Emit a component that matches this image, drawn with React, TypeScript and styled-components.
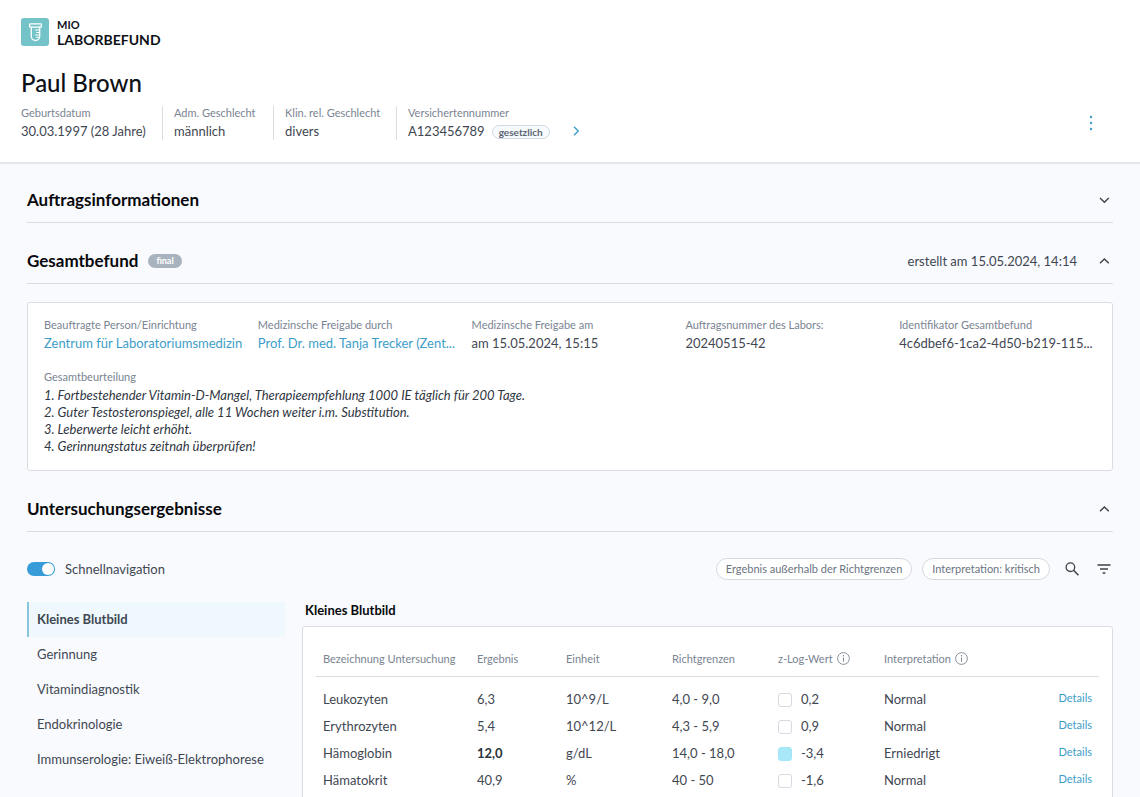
import React, { useState } from "react";
import styled, { createGlobalStyle } from "styled-components";

const color = {
  text: "#3f4752",
  strong: "#0d1117",
  muted: "#7a8492",
  line: "#dadee4",
  link: "#3d9dc8",
  page: "#f9fafe",
};

const GlobalStyle = createGlobalStyle`
  *, *::before, *::after { box-sizing: border-box; }
  html { scrollbar-width: none; }
  body {
    margin: 0;
    background: ${color.page};
    color: ${color.text};
    font-family: Lato, "Noto Sans", sans-serif;
    font-size: 13px;
    line-height: 17px;
  }
  button, input { font: inherit; }
  h1, h2, h3, p, dl, dd { margin: 0; padding: 0; }
`;

const Header = styled.header`
  background: #fff;
  border-bottom: 2px solid #e4e7ec;
  padding: 18px 21px 22px;
`;

const Brand = styled.div`
  display: flex;
  gap: 8px;
`;

const BrandIcon = styled.svg`
  width: 28px;
  height: 28px;
  flex: none;
`;

const BrandText = styled.div`
  color: ${color.strong};
  font-weight: 700;
  font-size: 11px;
  line-height: 14px;
`;

const BrandName = styled.div`
  font-size: 14px;
  line-height: 16px;
`;

const PatientName = styled.h1`
  margin-top: 19px;
  color: ${color.strong};
  font-size: 24px;
  line-height: 32px;
  font-weight: 500;
`;

const PatientRow = styled.div`
  display: flex;
  align-items: center;
  justify-content: space-between;
  margin-top: 7px;
  padding-right: 19px;
`;

const Facts = styled.div`
  display: flex;
`;

const FactList = styled.dl`
  display: flex;
`;

const Fact = styled.div<{ $width: number }>`
  min-width: ${(p) => p.$width}px;

  & + & {
    border-left: 1px solid ${color.line};
    padding-left: 11px;
  }
`;

const Label = styled.dt`
  color: ${color.muted};
  font-size: 11px;
  line-height: 13px;
  white-space: nowrap;
`;

const Value = styled.dd`
  display: flex;
  align-items: center;
  gap: 7px;
  height: 17px;
  margin-top: 4px;
  white-space: nowrap;
`;

const Pill = styled.span`
  border: 1px solid #cfdae3;
  border-radius: 8px;
  background: #f7fbfd;
  padding: 0 6px;
  color: #5b6673;
  font-size: 10px;
  line-height: 12px;
  font-weight: 700;
`;

const FinalBadge = styled.span`
  border-radius: 7px;
  background: #a9b3bf;
  padding: 0 8px;
  color: #fff;
  font-size: 9px;
  line-height: 14px;
  font-weight: 700;
`;

const IconButton = styled.button`
  display: inline-flex;
  align-items: center;
  justify-content: center;
  width: 18px;
  height: 18px;
  padding: 0;
  border: 0;
  background: none;
  color: #3b424c;
  cursor: pointer;
`;

const NextButton = styled(IconButton)`
  align-self: flex-end;
  color: ${color.link};
`;

const MenuButton = styled(IconButton)`
  color: ${color.link};
`;

const Main = styled.main`
  padding: 16px 27px 0;
`;

const SectionHead = styled.div`
  display: flex;
  align-items: center;
  gap: 10px;
  height: 43px;
  border-bottom: 1px solid ${color.line};
  padding-bottom: 2px;
`;

const SectionTitle = styled.h2`
  color: #08090c;
  font-size: 17px;
  line-height: 24px;
  font-weight: 700;
`;

const HeadEnd = styled.div`
  display: flex;
  align-items: center;
  gap: 18px;
  margin-left: auto;
`;

const Section = styled.section`
  & + & { margin-top: 18px; }
`;

const Card = styled.div`
  border: 1px solid ${color.line};
  border-radius: 3px;
  background: #fff;
`;

const ReportCard = styled(Card)`
  margin: 18px 0 14px;
  padding: 15px 20px 15px 16px;
`;

const ReportFacts = styled.dl`
  display: grid;
  grid-template-columns: repeat(5, minmax(0, 1fr));
  column-gap: 21px;
`;

const Link = styled.a`
  color: ${color.link};
  text-decoration: none;
`;

const Assessment = styled.div`
  margin-top: 17px;
`;

const AssessmentLabel = styled.h3`
  color: ${color.muted};
  font-size: 11px;
  line-height: 15px;
  font-weight: 400;
`;

const AssessmentText = styled.div`
  margin-top: 3px;
  color: #2f363f;
  font-style: italic;
`;

const Toolbar = styled.div`
  display: flex;
  align-items: center;
  justify-content: space-between;
  height: 22px;
  margin-top: 26px;
`;

const SwitchLabel = styled.label`
  display: flex;
  align-items: center;
  gap: 10px;
  cursor: pointer;
`;

const Switch = styled.input`
  appearance: none;
  width: 28px;
  height: 14px;
  margin: 0;
  border-radius: 7px;
  background: #b4bdc8;
  cursor: pointer;

  &::before {
    content: "";
    display: block;
    width: 12px;
    height: 12px;
    margin: 1px;
    border-radius: 50%;
    background: #fff;
  }
  &:checked { background: #379cd8; }
  &:checked::before { margin-left: 15px; }
`;

const Filters = styled.div`
  display: flex;
  align-items: center;
  gap: 10px;
`;

const FilterChip = styled.button`
  height: 22px;
  border: 1px solid #d5dae1;
  border-radius: 11px;
  background: #fff;
  padding: 0 9px;
  color: #6a7481;
  font-size: 11px;
  line-height: 20px;
  cursor: pointer;
`;

const Tools = styled.div`
  display: flex;
  gap: 14px;
  margin-left: 3px;
`;

const Results = styled.div`
  display: grid;
  grid-template-columns: 258px minmax(0, 1fr);
  column-gap: 17px;
  margin-top: 22px;
`;

const NavItem = styled.button<{ $active: boolean }>`
  display: block;
  width: 100%;
  height: 35px;
  border: 0;
  border-left: 2px solid ${(p) => (p.$active ? "#86c5da" : "transparent")};
  background: ${(p) => (p.$active ? "#eef8fd" : "none")};
  padding: 0 8px;
  color: ${color.text};
  font-weight: ${(p) => (p.$active ? 700 : 400)};
  text-align: left;
  cursor: pointer;
`;

const GroupTitle = styled.h3`
  padding-left: 3px;
  color: #08090c;
  font-size: 13px;
  line-height: 17px;
  font-weight: 700;
`;

const TableCard = styled(Card)`
  margin-top: 7px;
  padding: 16px 13px 20px;
`;

const Table = styled.table`
  width: 100%;
  table-layout: fixed;
  border-collapse: separate;
  border-spacing: 0;
`;

const HeadCell = styled.th<{ $width?: number }>`
  width: ${(p) => (p.$width ? `${p.$width}px` : "auto")};
  height: 34px;
  border-bottom: 1px solid ${color.line};
  padding: 0 0 2px 7px;
  color: ${color.muted};
  font-size: 11px;
  font-weight: 400;
  text-align: left;
  white-space: nowrap;
`;

const HeadLabel = styled.span`
  display: flex;
  align-items: center;
  gap: 4px;
`;

const Body = styled.tbody`
  &::before {
    content: "";
    display: block;
    height: 9px;
  }
`;

const Cell = styled.td<{ $strong?: boolean }>`
  height: 27px;
  padding: 0 0 0 7px;
  color: ${(p) => (p.$strong ? "#2b323b" : color.text)};
  font-weight: ${(p) => (p.$strong ? 700 : 400)};
  white-space: nowrap;
`;

const ActionCell = styled(Cell)`
  padding: 0 7px 4px 0;
  font-size: 11px;
  text-align: right;
`;

const ZScore = styled.span`
  display: flex;
  align-items: center;
  gap: 9px;
`;

const Swatch = styled.span<{ $low: boolean }>`
  width: 14px;
  height: 14px;
  border: 1px solid ${(p) => (p.$low ? "#a3e6f8" : "#d6dae0")};
  border-radius: 3px;
  background: ${(p) => (p.$low ? "#a9e8f9" : "#fff")};
`;

const Chevron = ({ d }: { d: string }) => (
  <svg width="12" height="12" viewBox="0 0 12 12" fill="none" stroke="currentColor" strokeWidth="1.4" aria-hidden="true">
    <path d={d} />
  </svg>
);
const chevronDown = "M2 4 6.4 8.2 10.8 4";
const chevronUp = "M2 8.2 6.4 4 10.8 8.2";

const InfoIcon = () => (
  <svg width="13" height="13" viewBox="0 0 13 13" fill="none" stroke="currentColor" aria-hidden="true">
    <circle cx="6.5" cy="6.5" r="5.9" strokeWidth="0.9" />
    <path d="M6.5 5.6v4" strokeWidth="1" />
    <circle cx="6.5" cy="3.8" r="0.7" fill="currentColor" stroke="none" />
  </svg>
);

const TestTubeIcon = () => (
  <BrandIcon viewBox="0 0 28 28" fill="none" stroke="#fff" strokeWidth="1.3" strokeLinejoin="round" strokeLinecap="round" aria-hidden="true">
    <rect width="28" height="28" rx="3" fill="#74c3c8" stroke="none" />
    <rect x="8.6" y="5.8" width="11.8" height="3.4" rx="0.8" />
    <path d="M10.3 9.2v9a4.2 4.2 0 0 0 8.4 0v-9" />
    <path d="M18.5 12h-4M18.5 14.5h-2.8M18.5 17h-4M18.2 19.3h-2.6" strokeWidth="1.1" />
  </BrandIcon>
);

const groups = ["Kleines Blutbild", "Gerinnung", "Vitamindiagnostik", "Endokrinologie", "Immunserologie: Eiweiß-Elektrophorese"];

const rows = [
  { name: "Leukozyten", result: "6,3", unit: "10^9/L", range: "4,0 - 9,0", z: "0,2", note: "Normal" },
  { name: "Erythrozyten", result: "5,4", unit: "10^12/L", range: "4,3 - 5,9", z: "0,9", note: "Normal" },
  { name: "Hämoglobin", result: "12,0", unit: "g/dL", range: "14,0 - 18,0", z: "-3,4", note: "Erniedrigt", low: true },
  { name: "Hämatokrit", result: "40,9", unit: "%", range: "40 - 50", z: "-1,6", note: "Normal" },
];

export default function App() {
  const [active, setActive] = useState(groups[0]);
  const [quickNav, setQuickNav] = useState(true);

  return (
    <>
      <GlobalStyle />
      <Header>
        <Brand>
          <TestTubeIcon />
          <BrandText>
            MIO
            <BrandName>LABORBEFUND</BrandName>
          </BrandText>
        </Brand>
        <PatientName>Paul Brown</PatientName>
        <PatientRow>
          <Facts>
            <FactList>
              <Fact $width={141}>
                <Label>Geburtsdatum</Label>
                <Value>30.03.1997 (28 Jahre)</Value>
              </Fact>
              <Fact $width={111}>
                <Label>Adm. Geschlecht</Label>
                <Value>männlich</Value>
              </Fact>
              <Fact $width={123}>
                <Label>Klin. rel. Geschlecht</Label>
                <Value>divers</Value>
              </Fact>
              <Fact $width={171}>
                <Label>Versichertennummer</Label>
                <Value>
                  A123456789 <Pill>gesetzlich</Pill>
                </Value>
              </Fact>
            </FactList>
            <NextButton aria-label="Weitere Angaben">
              <Chevron d="M4 1.8 8.2 6 4 10.2" />
            </NextButton>
          </Facts>
          <MenuButton aria-label="Menü">
            <svg width="4" height="16" viewBox="0 0 4 16" fill="currentColor" aria-hidden="true">
              <circle cx="2" cy="2" r="1.2" />
              <circle cx="2" cy="8" r="1.2" />
              <circle cx="2" cy="14" r="1.2" />
            </svg>
          </MenuButton>
        </PatientRow>
      </Header>

      <Main>
        <Section>
          <SectionHead>
            <SectionTitle>Auftragsinformationen</SectionTitle>
            <HeadEnd>
              <IconButton aria-label="Auftragsinformationen öffnen"><Chevron d={chevronDown} /></IconButton>
            </HeadEnd>
          </SectionHead>
        </Section>

        <Section>
          <SectionHead>
            <SectionTitle>Gesamtbefund</SectionTitle>
            <FinalBadge>final</FinalBadge>
            <HeadEnd>
              <span>erstellt am 15.05.2024, 14:14</span>
              <IconButton aria-label="Gesamtbefund schließen"><Chevron d={chevronUp} /></IconButton>
            </HeadEnd>
          </SectionHead>
          <ReportCard>
            <ReportFacts>
              <div>
                <Label>Beauftragte Person/Einrichtung</Label>
                <Value><Link href="#labor">Zentrum für Laboratoriumsmedizin</Link></Value>
              </div>
              <div>
                <Label>Medizinsche Freigabe durch</Label>
                <Value><Link href="#freigabe">Prof. Dr. med. Tanja Trecker (Zent...</Link></Value>
              </div>
              <div>
                <Label>Medizinsche Freigabe am</Label>
                <Value>am 15.05.2024, 15:15</Value>
              </div>
              <div>
                <Label>Auftragsnummer des Labors:</Label>
                <Value>20240515-42</Value>
              </div>
              <div>
                <Label>Identifikator Gesamtbefund</Label>
                <Value>4c6dbef6-1ca2-4d50-b219-115...</Value>
              </div>
            </ReportFacts>
            <Assessment>
              <AssessmentLabel>Gesamtbeurteilung</AssessmentLabel>
              <AssessmentText>
                <p>1. Fortbestehender Vitamin-D-Mangel, Therapieempfehlung 1000 IE täglich für 200 Tage.</p>
                <p>2. Guter Testosteronspiegel, alle 11 Wochen weiter i.m. Substitution.</p>
                <p>3. Leberwerte leicht erhöht.</p>
                <p>4. Gerinnungstatus zeitnah überprüfen!</p>
              </AssessmentText>
            </Assessment>
          </ReportCard>
        </Section>

        <Section>
          <SectionHead>
            <SectionTitle>Untersuchungsergebnisse</SectionTitle>
            <HeadEnd>
              <IconButton aria-label="Untersuchungsergebnisse schließen"><Chevron d={chevronUp} /></IconButton>
            </HeadEnd>
          </SectionHead>
          <Toolbar>
            <SwitchLabel>
              <Switch type="checkbox" role="switch" checked={quickNav} onChange={(e) => setQuickNav(e.target.checked)} />
              Schnellnavigation
            </SwitchLabel>
            <Filters>
              <FilterChip>Ergebnis außerhalb der Richtgrenzen</FilterChip>
              <FilterChip>Interpretation: kritisch</FilterChip>
              <Tools>
                <IconButton aria-label="Suchen">
                  <svg width="14" height="14" viewBox="0 0 14 14" fill="none" stroke="currentColor" strokeWidth="1.3" aria-hidden="true">
                    <circle cx="5.4" cy="5.2" r="4.3" />
                    <path d="m8.5 8.3 5 5" strokeWidth="1.6" />
                  </svg>
                </IconButton>
                <IconButton aria-label="Filtern">
                  <svg width="14" height="12" viewBox="0 0 14 12" fill="none" stroke="currentColor" strokeWidth="1.4" aria-hidden="true">
                    <path d="M0.5 2h13M3 6h8M5.6 10h2.8" />
                  </svg>
                </IconButton>
              </Tools>
            </Filters>
          </Toolbar>

          <Results>
            <nav aria-label="Schnellnavigation">
              {groups.map((g) => (
                <NavItem key={g} $active={g === active} onClick={() => setActive(g)}>{g}</NavItem>
              ))}
            </nav>
            <div>
              <GroupTitle>Kleines Blutbild</GroupTitle>
              <TableCard>
                <Table>
                  <thead>
                    <tr>
                      <HeadCell $width={154}>Bezeichnung Untersuchung</HeadCell>
                      <HeadCell $width={89}>Ergebnis</HeadCell>
                      <HeadCell $width={106}>Einheit</HeadCell>
                      <HeadCell $width={106}>Richtgrenzen</HeadCell>
                      <HeadCell $width={106}><HeadLabel>z-Log-Wert <InfoIcon /></HeadLabel></HeadCell>
                      <HeadCell><HeadLabel>Interpretation <InfoIcon /></HeadLabel></HeadCell>
                      <HeadCell $width={89} aria-label="Aktion" />
                    </tr>
                  </thead>
                  <Body>
                    {rows.map((r) => (
                      <tr key={r.name}>
                        <Cell>{r.name}</Cell>
                        <Cell $strong={r.low}>{r.result}</Cell>
                        <Cell>{r.unit}</Cell>
                        <Cell>{r.range}</Cell>
                        <Cell><ZScore><Swatch $low={!!r.low} />{r.z}</ZScore></Cell>
                        <Cell>{r.note}</Cell>
                        <ActionCell><Link href="#details">Details</Link></ActionCell>
                      </tr>
                    ))}
                  </Body>
                </Table>
              </TableCard>
            </div>
          </Results>
        </Section>
      </Main>
    </>
  );
}
